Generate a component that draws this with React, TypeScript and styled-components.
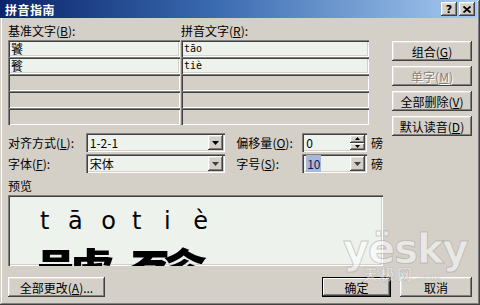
import styled, { createGlobalStyle } from 'styled-components'

const GlobalStyle = createGlobalStyle`
  html, body {
    margin: 0;
    padding: 0;
    background: #d4d0c8;
  }
  body {
    font-family: "Noto Sans CJK SC", "DejaVu Sans", sans-serif;
    font-size: 12px;
    color: #000;
  }
`

const raised = `
  box-shadow: inset -1px -1px #404040, inset 1px 1px #ffffff,
    inset -2px -2px #808080, inset 2px 2px #e4e0d8;
`

const sunken = `
  box-shadow: inset 1px 1px #808080, inset 2px 2px #404040,
    inset -1px -1px #ffffff, inset -2px -2px #d4d0c8;
`

const rows = [
  { base: '饕', ruby: 'tāo' },
  { base: '餮', ruby: 'tiè' },
  { base: '', ruby: '' },
  { base: '', ruby: '' },
  { base: '', ruby: '' },
]

function Label(props: { text: string; hot: string; colon?: boolean }) {
  return (
    <span>
      {props.text}(<u>{props.hot}</u>){props.colon ? ':' : ''}
    </span>
  )
}

function Arrow(props: { faint?: boolean }) {
  return (
    <svg width="7" height="4" viewBox="0 0 7 4">
      <path d="M0 0h7L3.5 4z" fill={props.faint ? '#404040' : '#000'} />
    </svg>
  )
}

function App() {
  return (
    <>
      <GlobalStyle />
      <Window>
        <TitleBar>
          <Title>拼音指南</Title>
          <TitleButtons>
            <CaptionBtn>?</CaptionBtn>
            <CaptionBtn>
              <svg width="8" height="7" viewBox="0 0 8 7">
                <path d="M0.5 0.5l7 6M7.5 0.5l-7 6" stroke="#000" strokeWidth="1.8" />
              </svg>
            </CaptionBtn>
          </TitleButtons>
        </TitleBar>

        <Body>
          <Upper>
            <Main>
              <Headers>
                <Label text="基准文字" hot="B" colon />
                <Label text="拼音文字" hot="R" colon />
              </Headers>
              <Table>
                {rows.map((r, i) => (
                  <>
                    <Cell key={'b' + i} $filled={r.base !== ''}>{r.base}</Cell>
                    <Cell key={'r' + i} $filled={r.ruby !== ''} $latin>{r.ruby}</Cell>
                  </>
                ))}
              </Table>

              <Options>
                <OptRow>
                  <OptLabel $w={78}><Label text="对齐方式" hot="L" colon /></OptLabel>
                  <Combo $w={140}>
                    <ComboText>1-2-1</ComboText>
                    <DropBtn><Arrow /></DropBtn>
                  </Combo>
                  <OptLabel $w={66} $ml={11}><Label text="偏移量" hot="O" colon /></OptLabel>
                  <Combo $w={65}>
                    <ComboText>0</ComboText>
                    <Spin>
                      <SpinHalf>
                        <svg width="5" height="3" viewBox="0 0 5 3"><path d="M2.5 0L5 3H0z" /></svg>
                      </SpinHalf>
                      <SpinHalf>
                        <svg width="5" height="3" viewBox="0 0 5 3"><path d="M0 0h5L2.5 3z" /></svg>
                      </SpinHalf>
                    </Spin>
                  </Combo>
                  <Unit>磅</Unit>
                </OptRow>
                <OptRow>
                  <OptLabel $w={78}><Label text="字体" hot="F" colon /></OptLabel>
                  <Combo $w={140}>
                    <ComboText>宋体</ComboText>
                    <DropBtn><Arrow faint /></DropBtn>
                  </Combo>
                  <OptLabel $w={66} $ml={11}><Label text="字号" hot="S" colon /></OptLabel>
                  <Combo $w={65}>
                    <ComboText><Selected>10</Selected></ComboText>
                    <DropBtn><Arrow faint /></DropBtn>
                  </Combo>
                  <Unit>磅</Unit>
                </OptRow>
              </Options>

              <PreviewLabel>预览</PreviewLabel>
              <Preview>
                <RubyGroup>
                  <Ruby>
                    <Pinyin><span>t</span><span>ā</span><span>o</span></Pinyin>
                    <Han>饕</Han>
                  </Ruby>
                  <Ruby>
                    <Pinyin><span>t</span><span>i</span><span>è</span></Pinyin>
                    <Han>餮</Han>
                  </Ruby>
                </RubyGroup>
              </Preview>
            </Main>

            <Side>
              <Button>组合(<u>G</u>)</Button>
              <Button disabled>单字(<u>M</u>)</Button>
              <Button>全部删除(<u>V</u>)</Button>
              <Button>默认读音(<u>D</u>)</Button>
            </Side>
          </Upper>

          <Footer>
            <Button $w={97}>全部更改(<u>A</u>)...</Button>
            <FooterRight>
              <Button $w={69} $default>确定</Button>
              <Button $w={72}>取消</Button>
            </FooterRight>
          </Footer>
        </Body>

        <Watermark>
          <WmLogo>yësky</WmLogo>
          <WmSub>天极网<small>.com</small></WmSub>
        </Watermark>
      </Window>
    </>
  )
}

const Window = styled.div`
  position: relative;
  width: 480px;
  height: 305px;
  box-sizing: border-box;
  background: #d4d0c8;
  padding: 0 0 0 0;
  box-shadow: inset -1px -1px #404040, inset 1px 1px #d4d0c8,
    inset -2px -2px #808080, inset 2px 2px #ffffff;
  overflow: hidden;
`

const TitleBar = styled.div`
  height: 18px;
  margin: 0 3px 0 0;
  display: flex;
  align-items: center;
  justify-content: space-between;
  background: linear-gradient(to right, #0a246a 0%, #3a6ab0 45%, #a6caf0 100%);
`

const Title = styled.div`
  color: #fff;
  font-weight: bold;
  font-size: 12px;
  padding-left: 5px;
  letter-spacing: 0.5px;
`

const TitleButtons = styled.div`
  display: flex;
  gap: 2px;
  padding-right: 2px;
`

const CaptionBtn = styled.div`
  width: 16px;
  height: 14px;
  display: flex;
  align-items: center;
  justify-content: center;
  background: #d4d0c8;
  font-family: "DejaVu Sans", sans-serif;
  font-weight: bold;
  font-size: 11px;
  ${raised}
`

const Body = styled.div`
  padding: 6px 8px 0 8px;
  display: flex;
  flex-direction: column;
`

const Upper = styled.div`
  display: flex;
  gap: 9px;
`

const Main = styled.div`
  width: 375px;
  display: flex;
  flex-direction: column;
`

const Headers = styled.div`
  display: grid;
  grid-template-columns: 173px 188px;
  height: 14px;
  line-height: 14px;
  margin-bottom: 2px;
`

const Table = styled.div`
  display: grid;
  grid-template-columns: 172px 188px;
  grid-auto-rows: 17px;
  column-gap: 1px;
`

const Cell = styled.div<{ $filled?: boolean; $latin?: boolean }>`
  box-sizing: border-box;
  padding: 0 3px;
  line-height: 17px;
  background: ${(p) => (p.$filled ? '#edf3ec' : '#d4d0c8')};
  font-family: ${(p) =>
    p.$latin ? '"DejaVu Sans Mono", monospace' : '"Noto Sans CJK SC", sans-serif'};
  font-size: ${(p) => (p.$latin ? '10px' : '12px')};
  ${sunken}
`

const Options = styled.div`
  margin-top: 8px;
  display: flex;
  flex-direction: column;
  gap: 2px;
`

const OptRow = styled.div`
  display: flex;
  align-items: center;
  height: 19px;
`

const OptLabel = styled.div<{ $w: number; $ml?: number }>`
  width: ${(p) => p.$w}px;
  margin-left: ${(p) => p.$ml || 0}px;
  white-space: nowrap;
`

const Combo = styled.div<{ $w: number }>`
  width: ${(p) => p.$w}px;
  height: 19px;
  box-sizing: border-box;
  padding: 2px;
  display: flex;
  background: #edf3ec;
  ${sunken}
`

const ComboText = styled.div`
  flex: 1;
  padding-left: 2px;
  line-height: 15px;
  font-family: "Noto Sans CJK SC", "DejaVu Sans", sans-serif;
  font-size: 12px;
`

const Selected = styled.span`
  background: #a8b8d8;
  color: #10205a;
  padding: 0 1px;
`

const DropBtn = styled.div`
  width: 15px;
  height: 15px;
  display: flex;
  align-items: center;
  justify-content: center;
  background: #d4d0c8;
  ${raised}
`

const Spin = styled.div`
  width: 15px;
  display: flex;
  flex-direction: column;
`

const SpinHalf = styled.div`
  flex: 1;
  display: flex;
  align-items: center;
  justify-content: center;
  background: #d4d0c8;
  ${raised}
`

const Unit = styled.div`
  margin-left: 4px;
`

const PreviewLabel = styled.div`
  margin-top: 6px;
  height: 14px;
  line-height: 14px;
`

const Preview = styled.div`
  margin-top: 2px;
  height: 71px;
  box-sizing: border-box;
  background: #edf3ec;
  overflow: hidden;
  padding: 13px 0 0 30px;
  ${sunken}
`

const RubyGroup = styled.div`
  display: flex;
  gap: 12px;
`

const Ruby = styled.div`
  width: 80px;
  display: flex;
  flex-direction: column;
`

const Pinyin = styled.div`
  display: flex;
  justify-content: space-between;
  font-family: "DejaVu Sans", sans-serif;
  font-size: 24px;
  line-height: 26px;
  padding: 0 2px;
`

const Han = styled.div`
  margin-top: 7px;
  font-family: "Noto Sans CJK SC", sans-serif;
  font-weight: bold;
  font-size: 80px;
  line-height: 80px;
  margin-left: -2px;
`

const Side = styled.div`
  width: 80px;
  margin-top: 17px;
  display: flex;
  flex-direction: column;
  gap: 5px;
`

const Button = styled.div<{ $w?: number; disabled?: boolean; $default?: boolean }>`
  width: ${(p) => (p.$w ? p.$w + 'px' : 'auto')};
  height: 20px;
  box-sizing: border-box;
  display: flex;
  align-items: center;
  justify-content: center;
  background: #d4d0c8;
  color: ${(p) => (p.disabled ? '#808080' : '#000')};
  text-shadow: ${(p) => (p.disabled ? '1px 1px #ffffff' : 'none')};
  white-space: nowrap;
  ${(p) =>
    p.$default
      ? `box-shadow: inset 1px 1px #000, inset -1px -1px #000, inset -2px -2px #404040, inset 2px 2px #ffffff, inset -3px -3px #808080;`
      : raised}
`

const Footer = styled.div`
  margin-top: 11px;
  display: flex;
  justify-content: space-between;
`

const FooterRight = styled.div`
  display: flex;
  gap: 9px;
`

const Watermark = styled.div`
  position: absolute;
  left: 343px;
  top: 232px;
  pointer-events: none;
  display: flex;
  flex-direction: column;
  align-items: flex-start;
`

const WmLogo = styled.div`
  font-family: "DejaVu Sans", sans-serif;
  font-weight: bold;
  font-size: 40px;
  line-height: 34px;
  color: rgba(255, 255, 255, 0.55);
  -webkit-text-stroke: 1px rgba(150, 150, 150, 0.45);
  letter-spacing: -1px;
`

const WmSub = styled.div`
  margin-left: 20px;
  font-family: "Noto Sans CJK SC", sans-serif;
  font-weight: bold;
  font-size: 15px;
  line-height: 16px;
  color: rgba(255, 255, 255, 0.45);
  -webkit-text-stroke: 0.6px rgba(140, 140, 140, 0.4);
  letter-spacing: 2px;

  small {
    font-family: "DejaVu Sans", sans-serif;
    font-size: 9px;
    letter-spacing: 0;
    margin-left: 2px;
  }
`

export default App
